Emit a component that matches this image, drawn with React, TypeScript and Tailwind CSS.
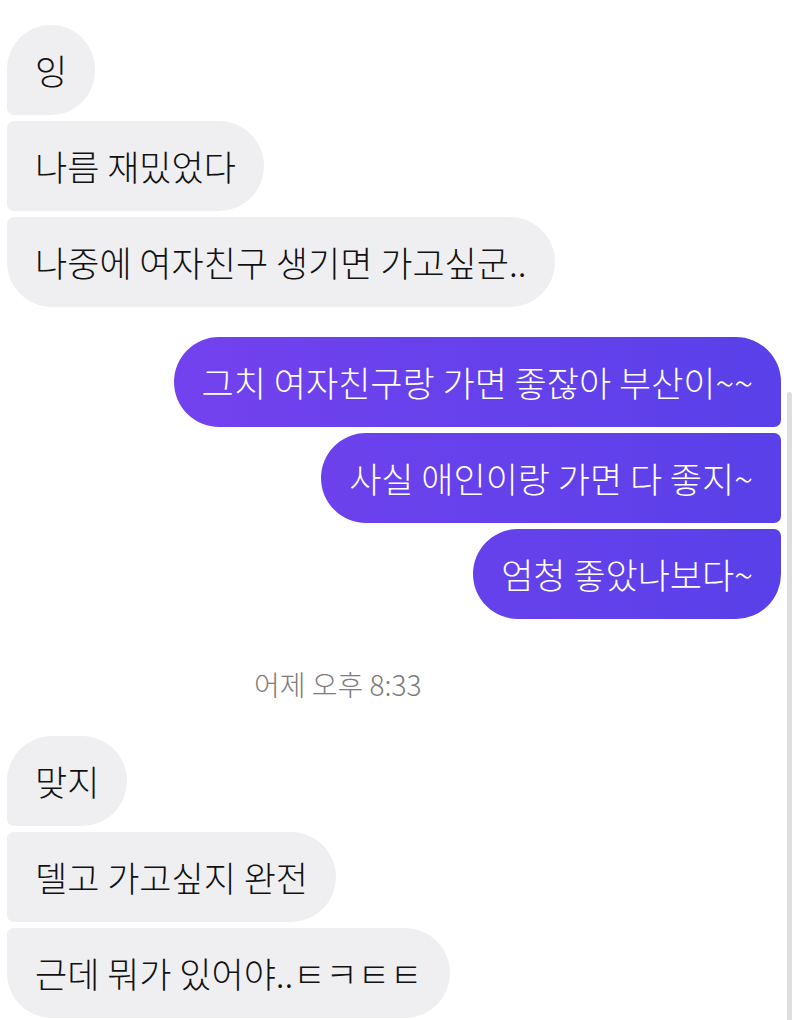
import React from "react";

const font = { fontFamily: '"Noto Sans CJK KR", "Noto Sans", sans-serif' };

type Pos = "first" | "mid" | "last";

function Left({ text, pos }: { text: string; pos: Pos }) {
  const r =
    pos === "first"
      ? "rounded-tl-[45px] rounded-bl-[7px]"
      : pos === "last"
      ? "rounded-tl-[7px] rounded-bl-[45px]"
      : "rounded-tl-[7px] rounded-bl-[7px]";
  return (
    <div className="flex justify-start pl-[7px]">
      <div
        className={`h-[90px] flex items-center px-[28px] bg-[#efeff1] text-[#111] text-[35px] font-light rounded-tr-[45px] rounded-br-[45px] ${r}`}
      >
        <span className="whitespace-nowrap">{text}</span>
      </div>
    </div>
  );
}

function Right({ text, pos }: { text: string; pos: Pos }) {
  const r =
    pos === "first"
      ? "rounded-tr-[45px] rounded-br-[7px]"
      : pos === "last"
      ? "rounded-tr-[7px] rounded-br-[45px]"
      : "rounded-tr-[7px] rounded-br-[7px]";
  return (
    <div className="flex justify-end pr-[19px]">
      <div
        className={`h-[90px] flex items-center px-[28px] bg-fixed bg-linear-to-r from-[#7a42f0] to-[#5840e8] text-white text-[35px] font-light rounded-tl-[45px] rounded-bl-[45px] ${r}`}
      >
        <span className="whitespace-nowrap">{text}</span>
      </div>
    </div>
  );
}

export default function App() {
  return (
    <div className="relative w-[800px] h-[1020px] overflow-hidden bg-white" style={font}>
      <div className="flex flex-col pt-[25px]">
        <div className="flex flex-col gap-[6px]">
          <Left text="잉" pos="first" />
          <Left text="나름 재밌었다" pos="mid" />
          <Left text="나중에 여자친구 생기면 가고싶군.." pos="last" />
        </div>
        <div className="flex flex-col gap-[6px] mt-[30px]">
          <Right text="그치 여자친구랑 가면 좋잖아 부산이~~" pos="first" />
          <Right text="사실 애인이랑 가면 다 좋지~" pos="mid" />
          <Right text="엄청 좋았나보다~" pos="last" />
        </div>
        <div className="mt-[50px] h-[30px] flex items-center pl-[254px] text-[28px] font-light text-[#7c7c7c]">
          어제 오후 8:33
        </div>
        <div className="flex flex-col gap-[6px] mt-[37px]">
          <Left text="맞지" pos="first" />
          <Left text="델고 가고싶지 완전" pos="mid" />
          <Left text="근데 뭐가 있어야..ㅌㅋㅌㅌ" pos="last" />
        </div>
      </div>
      <div className="absolute left-[787px] top-[392px] w-[5px] h-[640px] rounded-full bg-[#dedede]" />
    </div>
  );
}
